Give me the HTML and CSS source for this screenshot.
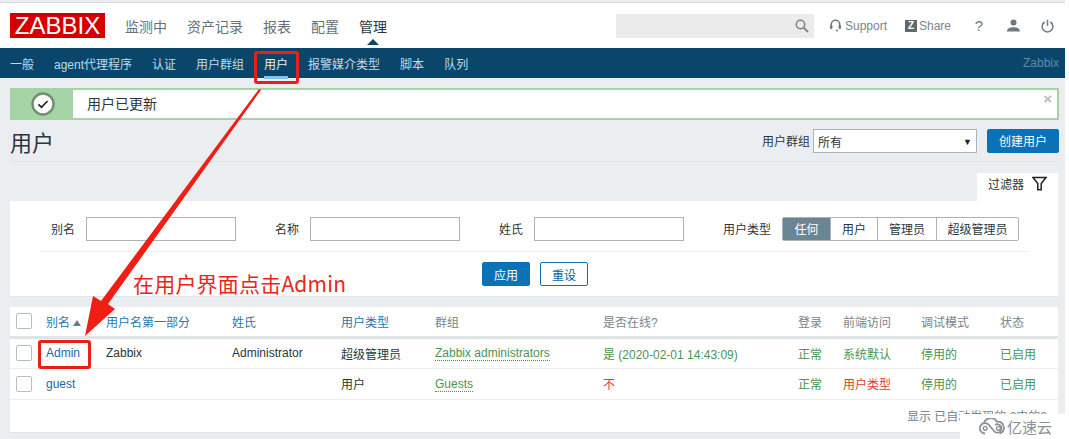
FILE: index.html
```html
<!DOCTYPE html>
<html lang="en">
<head>
    <meta charset="UTF-8">
    <meta name="viewport" content="width=device-width, initial-scale=1.0">
    <title>用户 - Zabbix</title>
    <link rel="stylesheet" href="styles.css">
</head>
<body>
<div id="page">
    <header id="top-bar">
        <div class="logo">ZABBIX</div>
        <nav class="main-menu">
            <a>监测中</a>
            <a>资产记录</a>
            <a>报表</a>
            <a>配置</a>
            <a class="current">管理</a>
        </nav>
        <div class="search-box">
            <svg class="search-icon" width="14" height="14" viewBox="0 0 14 14"><circle cx="5.5" cy="5.5" r="4.2" fill="none" stroke="#7a8288" stroke-width="1.5"/><path d="M8.6 8.6L13 13" stroke="#7a8288" stroke-width="1.8"/></svg>
        </div>
        <a class="top-link support">
            <svg width="11" height="13" viewBox="0 0 11 13"><path d="M1.300 8V5.500a4.200 4.200 0 0 1 8.400 0V8" fill="none" stroke="#6f7a80" stroke-width="1.500"/><rect x="0" y="6" width="2.400" height="4" rx="1" fill="#6f7a80"/><rect x="8.600" y="6" width="2.400" height="4" rx="1" fill="#6f7a80"/><circle cx="7" cy="11.600" r="1" fill="#6f7a80"/></svg>
            Support
        </a>
        <a class="top-link share">
            <span class="z-box">Z</span>
            Share
        </a>
        <a class="top-icon help">?</a>
        <a class="top-icon">
            <svg width="13" height="13" viewBox="0 0 13 13"><circle cx="6.500" cy="3.400" r="3" fill="#6f7a80"/><path d="M0 12.500c0-3 2.800-4.200 6.500-4.200s6.500 1.200 6.500 4.200z" fill="#6f7a80"/></svg>
        </a>
        <a class="top-icon">
            <svg width="13" height="14" viewBox="0 0 13 14"><path d="M3.600 3a5.400 5.400 0 1 0 5.800 0" fill="none" stroke="#6f7a80" stroke-width="1.500"/><path d="M6.500 0.800v6" stroke="#6f7a80" stroke-width="1.500"/></svg>
        </a>
    </header>

    <nav id="sub-menu">
        <a>一般</a>
        <a>agent代理程序</a>
        <a>认证</a>
        <a>用户群组</a>
        <a class="current">用户</a>
        <a>报警媒介类型</a>
        <a>脚本</a>
        <a>队列</a>
        <span class="server-name">Zabbix</span>
    </nav>

    <main id="content">
        <div class="message">
            <div class="message-icon">
                <svg width="24" height="24" viewBox="0 0 24 24"><circle cx="12" cy="12" r="10.500" fill="#fff" stroke="#6f8f70" stroke-width="2.400"/><path d="M7.500 12.300l3 3 6-6.300" fill="none" stroke="#222" stroke-width="1.700"/></svg>
            </div>
            <div class="message-text">用户已更新</div>
            <span class="message-close">×</span>
        </div>

        <div class="title-row">
            <h1>用户</h1>
            <div class="title-controls">
                <label>用户群组</label>
                <div class="select-box"><span>所有</span><span class="select-arrow">▼</span></div>
                <button class="btn-primary create-btn">创建用户</button>
            </div>
        </div>

        <div class="filter-tabs">
            <div class="filter-tab">
                过滤器
                <svg width="15" height="15" viewBox="0 0 15 15"><path d="M1 1.500h13L9.200 7.500v6.200H5.800V7.500z" fill="none" stroke="#222" stroke-width="1.500"/></svg>
            </div>
        </div>
        <section class="filter-panel">
            <div class="filter-row">
                <label>别名</label>
                <input class="text-input" type="text">
                <label class="next">名称</label>
                <input class="text-input" type="text">
                <label class="next">姓氏</label>
                <input class="text-input" type="text">
                <label class="next">用户类型</label>
                <div class="segments">
                    <span class="seg seg-any active">任何</span>
                    <span class="seg seg-user">用户</span>
                    <span class="seg seg-admin">管理员</span>
                    <span class="seg seg-super">超级管理员</span>
                </div>
            </div>
            <div class="filter-buttons">
                <button class="btn-primary">应用</button>
                <button class="btn-outline">重设</button>
            </div>
        </section>

        <section class="list-panel">
            <table class="user-table">
                <colgroup>
                    <col class="c-check"><col class="c-alias"><col class="c-name"><col class="c-surname">
                    <col class="c-type"><col class="c-group"><col class="c-online"><col class="c-login">
                    <col class="c-front"><col class="c-debug"><col class="c-status">
                </colgroup>
                <thead>
                    <tr>
                        <th><span class="checkbox"></span></th>
                        <th class="sort">别名 <i class="sort-up"></i></th>
                        <th class="sort">用户名第一部分</th>
                        <th class="sort">姓氏</th>
                        <th class="sort">用户类型</th>
                        <th>群组</th>
                        <th>是否在线?</th>
                        <th>登录</th>
                        <th>前端访问</th>
                        <th>调试模式</th>
                        <th>状态</th>
                    </tr>
                </thead>
                <tbody>
                    <tr>
                        <td><span class="checkbox"></span></td>
                        <td class="link">Admin</td>
                        <td>Zabbix</td>
                        <td>Administrator</td>
                        <td>超级管理员</td>
                        <td><span class="group-link">Zabbix administrators</span></td>
                        <td class="green">是 (2020-02-01 14:43:09)</td>
                        <td class="green">正常</td>
                        <td class="green">系统默认</td>
                        <td class="green">停用的</td>
                        <td class="green">已启用</td>
                    </tr>
                    <tr>
                        <td><span class="checkbox"></span></td>
                        <td class="link">guest</td>
                        <td></td>
                        <td></td>
                        <td>用户</td>
                        <td><span class="group-link">Guests</span></td>
                        <td class="red">不</td>
                        <td class="green">正常</td>
                        <td class="red">用户类型</td>
                        <td class="green">停用的</td>
                        <td class="green">已启用</td>
                    </tr>
                </tbody>
            </table>
            <div class="table-footer">显示 已自动发现的 2中的2</div>
        </section>
    </main>
</div>

<!-- red annotations drawn on top of the screenshot -->
<div class="mark mark-tab"></div>
<div class="mark mark-admin"></div>
<svg class="arrow" width="300" height="350" viewBox="0 0 300 350"><polygon points="259,89 261,90 108,304 115,309 85,336 93,296 101,301" fill="#f01f16"/></svg>
<div class="note">在用户界面点击Admin</div>

<div class="watermark">
    <svg width="27" height="17" viewBox="0 0 27 17"><path d="M6 15.500a5.200 5.200 0 1 1 4-8.500l5 6a4.200 4.200 0 1 0 1-6" fill="none" stroke="#8b9196" stroke-width="1.800"/><path d="M4.500 5.500a7.500 7.500 0 0 1 13.500-1.800 5.500 5.500 0 0 1 6.500 4" fill="none" stroke="#8b9196" stroke-width="1.800"/><path d="M24.500 8a5.200 5.200 0 0 1-4 7.500" fill="none" stroke="#8b9196" stroke-width="1.800"/><circle cx="6.200" cy="10.300" r="1.900" fill="none" stroke="#8b9196" stroke-width="1.400"/><circle cx="19.500" cy="10.300" r="1.900" fill="none" stroke="#8b9196" stroke-width="1.400"/></svg>
    <span>亿速云</span>
</div>
</body>
</html>
```

FILE: styles.css
```css
* {
    box-sizing: border-box;
}
html, body {
    margin: 0;
    height: 439px;
    overflow: hidden;
    background-color: #fff;
}
body {
    position: relative;
    font-family: "Liberation Sans", Arial, "Noto Sans CJK SC", sans-serif;
    font-size: 12px;
    color: #2b363c;
}
#page {
    width: 1065px;
    height: 439px;
    padding-top: 2px;
    background-color: #ebeef0;
    overflow: hidden;
}

/* top bar */
#top-bar {
    height: 46px;
    display: flex;
    align-items: center;
    padding-left: 10px;
    background-color: #fff;
    border-top: 1px solid #ddd;
}
.logo {
    width: 95px;
    height: 25px;
    background-color: #d40000;
    color: #fff;
    font-size: 24px;
    line-height: 25px;
    text-align: center;
}
.main-menu {
    display: flex;
    gap: 20px;
    margin-left: 20px;
    width: 491px;
    font-size: 14px;
    color: #667076;
}
.main-menu .current {
    position: relative;
    color: #2b363c;
}
.main-menu .current::after {
    content: "";
    position: absolute;
    left: 8px;
    top: 23px;
    border: 6px solid transparent;
    border-top: 0;
    border-bottom-color: #0a466a;
}
.search-box {
    width: 198px;
    height: 24px;
    display: flex;
    align-items: center;
    justify-content: flex-end;
    padding-right: 5px;
    background-color: #ebebeb;
}
.top-link {
    display: flex;
    align-items: center;
    gap: 4px;
    color: #7b858a;
    font-size: 12px;
}
.support {
    margin-left: 16px;
    width: 75px;
}
.share {
    gap: 2px;
    width: 57px;
}
.z-box {
    width: 12px;
    height: 12px;
    background-color: #5f6a70;
    color: #fff;
    font-size: 10px;
    font-weight: bold;
    line-height: 12px;
    text-align: center;
}
.top-icon {
    width: 34px;
    display: flex;
    justify-content: center;
    color: #6f7a80;
}
.help {
    font-size: 15px;
}

/* sub menu */
#sub-menu {
    height: 30px;
    display: flex;
    align-items: center;
    padding-left: 10px;
    padding-right: 6px;
    gap: 20px;
    background-color: #0a466a;
    color: #bcdcee;
}
#sub-menu a {
    position: relative;
}
#sub-menu .current {
    color: #e8f4fb;
}
#sub-menu .current::after {
    content: "";
    position: absolute;
    left: 0;
    right: 0;
    top: 21px;
    height: 3px;
    background-color: #7fc6ef;
}
.server-name {
    margin-left: auto;
    color: #5f8ba3;
}

/* content */
#content {
    padding: 10px 6px 0 10px;
}
.message {
    position: relative;
    height: 32px;
    display: flex;
    align-items: center;
    background-color: #fff;
    border: 2px solid #a6d3a5;
}
.message-icon {
    width: 61px;
    height: 100%;
    display: flex;
    align-items: center;
    justify-content: center;
    background-color: #a6d3a5;
}
.message-text {
    margin-left: 14px;
    margin-bottom: 2px;
    font-size: 14px;
}
.message-close {
    position: absolute;
    right: 5px;
    top: 0;
    font-size: 15px;
    font-weight: bold;
    line-height: 18px;
    color: #b4bdc2;
}
.title-row {
    height: 42px;
    display: flex;
    align-items: center;
    justify-content: space-between;
    border-bottom: 1px solid #e0e4e7;
}
h1 {
    margin: 0;
    font-size: 22px;
    font-weight: normal;
    color: #2b363c;
}
.title-controls {
    display: flex;
    align-items: center;
}
.select-box {
    width: 164px;
    height: 24px;
    display: flex;
    align-items: center;
    justify-content: space-between;
    margin-left: 3px;
    padding: 2px 4px 0;
    background-color: #fff;
    border: 1px solid #a9b3b8;
}
.select-arrow {
    font-size: 9px;
    color: #222;
}
.btn-primary, .btn-outline {
    height: 24px;
    width: 48px;
    padding: 0;
    border-radius: 2px;
    font-family: inherit;
    font-size: 12px;
}
.btn-primary {
    background-color: #0a72b5;
    border: 1px solid #0a72b5;
    color: #fff;
}
.btn-outline {
    background-color: #fff;
    border: 1px solid #0a72b5;
    color: #0a5f95;
}
.create-btn {
    width: 72px;
    margin-left: 10px;
}

/* filter */
.filter-tabs {
    display: flex;
    justify-content: flex-end;
    padding-top: 11px;
    padding-right: 1px;
}
.filter-tab {
    width: 81px;
    height: 28px;
    display: flex;
    align-items: center;
    justify-content: space-between;
    padding: 0 11px 8px 11px;
    background-color: #fff;
}
.filter-panel {
    width: 1048px;
    height: 96px;
    padding-top: 16px;
    background-color: #fff;
    border-bottom: 1px solid #dfe4e7;
}
.filter-row {
    display: flex;
    align-items: center;
    height: 35px;
    margin: 0 30px;
    padding-left: 11px;
    padding-bottom: 11px;
    border-bottom: 1px solid #ebeef0;
}
.filter-row label {
    margin-right: 11px;
}
.filter-row .next {
    margin-left: 39px;
}
.text-input {
    width: 150px;
    height: 24px;
    border: 1px solid #a9b3b8;
    background-color: #fff;
}
.segments {
    display: flex;
    height: 24px;
    border: 1px solid #a9b3b8;
    border-radius: 2px;
}
.seg {
    display: flex;
    align-items: center;
    justify-content: center;
    border-left: 1px solid #a9b3b8;
}
.seg.active {
    background-color: #6c8596;
    color: #fff;
    border-left: 0;
}
.seg-any {
    width: 47px;
}
.seg-user {
    width: 47px;
}
.seg-admin {
    width: 59px;
}
.seg-super {
    width: 82px;
}
.filter-buttons {
    display: flex;
    justify-content: center;
    gap: 10px;
    margin-top: 10px;
    padding-left: 2px;
}

/* users list */
.list-panel {
    width: 1048px;
    height: 126px;
    margin-top: 10px;
    background-color: #fff;
    border-bottom: 1px solid #dfe4e7;
}
.user-table {
    width: 100%;
    table-layout: fixed;
    border-collapse: collapse;
}
.c-check { width: 31px; }
.c-alias { width: 60px; }
.c-name { width: 126px; }
.c-surname { width: 109px; }
.c-type { width: 94px; }
.c-group { width: 168px; }
.c-online { width: 195px; }
.c-login { width: 45px; }
.c-front { width: 78px; }
.c-debug { width: 79px; }
.c-status { width: 63px; }
.user-table th, .user-table td {
    padding: 0 5px;
    text-align: left;
    font-weight: normal;
    white-space: nowrap;
}
.user-table th {
    height: 30px;
    color: #7a8489;
    border-bottom: 3px solid #dfe4e7;
}
.user-table th.sort {
    color: #2b77ab;
}
.user-table td {
    height: 31px;
    border-bottom: 1px solid #ebeef0;
}
.user-table th:first-child, .user-table td:first-child {
    padding-right: 0;
}
.checkbox {
    display: block;
    width: 16px;
    height: 16px;
    margin-left: 1px;
    border: 1px solid #b5bfc4;
    border-radius: 2px;
}
.sort-up {
    display: inline-block;
    margin-bottom: 1px;
    border: 4px solid transparent;
    border-top: 0;
    border-bottom: 6px solid #6c7a82;
}
.link {
    color: #1a679e;
}
.green {
    color: #4a9450;
}
.red {
    color: #e4392f;
}
.group-link {
    color: #4a9450;
    border-bottom: 1px dotted #4a9450;
}
.table-footer {
    padding: 7px 11px 0 0;
    text-align: right;
    color: #7a8489;
}

/* annotations */
.mark {
    position: absolute;
    border: 3px solid #e9201a;
    border-radius: 3px;
}
.mark-tab {
    left: 254px;
    top: 51px;
    width: 45px;
    height: 33px;
}
.mark-admin {
    left: 38px;
    top: 340px;
    width: 53px;
    height: 29px;
}
.arrow {
    position: absolute;
    left: 0;
    top: 0;
}
.note {
    position: absolute;
    left: 133px;
    top: 269px;
    font-family: "Noto Sans CJK SC", sans-serif;
    font-size: 21px;
    line-height: 28px;
    letter-spacing: 0.2px;
    color: #e9261c;
    white-space: nowrap;
}
.watermark {
    position: absolute;
    left: 960px;
    top: 414px;
    width: 109px;
    height: 25px;
    display: flex;
    align-items: center;
    gap: 1px;
    padding-left: 19px;
    background-color: #fff;
    font-family: "Noto Sans CJK SC", sans-serif;
    font-size: 15px;
    color: #8b9196;
}
```
